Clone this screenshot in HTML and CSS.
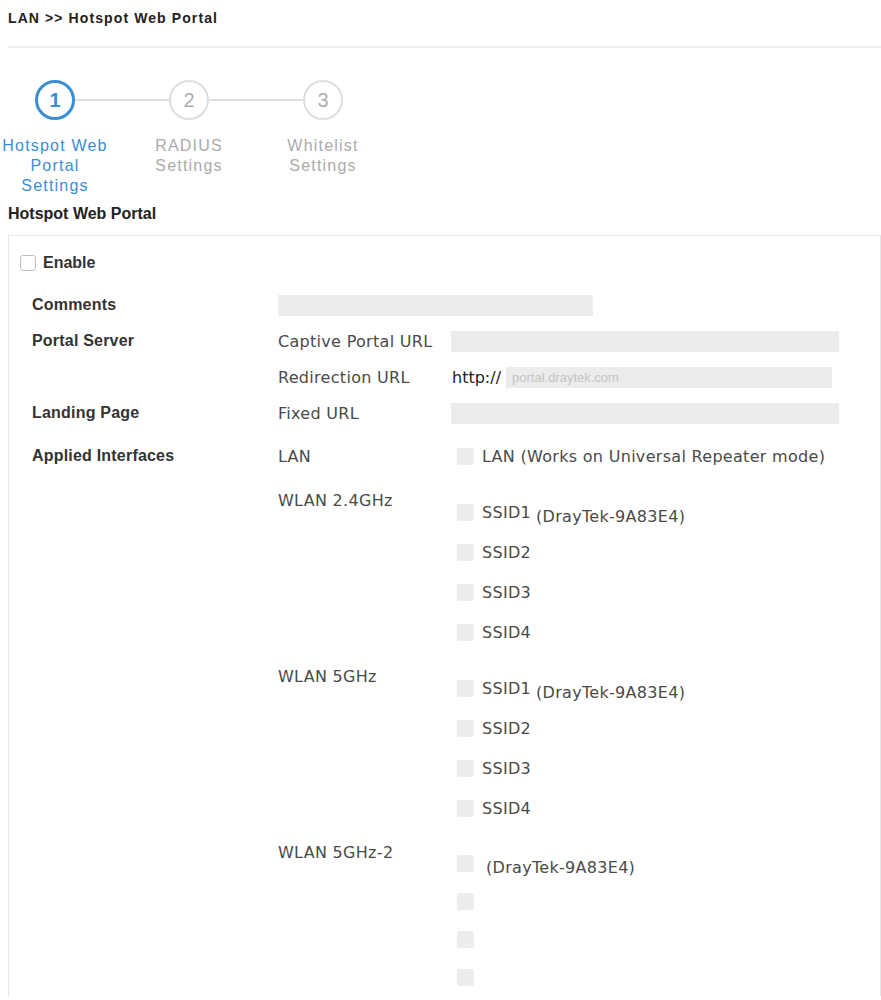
FILE: index.html
```html
<!DOCTYPE html>
<html lang="en">

<head>
    <meta charset="UTF-8">
    <meta name="viewport" content="width=device-width, initial-scale=1.0">
    <title>LAN &gt;&gt; Hotspot Web Portal</title>
    <link rel="stylesheet" href="styles.css">
</head>

<body>
    <div class="breadcrumb">LAN &gt;&gt; Hotspot Web Portal</div>
    <div class="divider"></div>

    <!-- wizard steps -->
    <div class="wizard">
        <div class="wizard-track">
            <span class="step-dot active">1</span>
            <span class="step-line"></span>
            <span class="step-dot">2</span>
            <span class="step-line"></span>
            <span class="step-dot">3</span>
        </div>
        <div class="wizard-labels">
            <div class="step-label active">Hotspot Web<br>Portal<br>Settings</div>
            <div class="step-label">RADIUS<br>Settings</div>
            <div class="step-label">Whitelist<br>Settings</div>
        </div>
    </div>

    <h3 class="section-title">Hotspot Web Portal</h3>

    <div class="panel">
        <label class="enable"><input type="checkbox" class="box">Enable</label>

        <div class="form">
            <div class="row">
                <div class="row-label">Comments</div>
                <div class="row-wide"><input type="text" class="field field-comments"></div>
            </div>

            <div class="row">
                <div class="row-label">Portal Server</div>
                <div class="row-name">Captive Portal URL</div>
                <div><input type="text" class="field field-long"></div>
            </div>

            <div class="row">
                <div class="row-label"></div>
                <div class="row-name">Redirection URL</div>
                <div class="url-wrap">
                    <span class="http">http://</span>
                    <input type="text" class="field field-url" placeholder="portal.draytek.com">
                </div>
            </div>

            <div class="row">
                <div class="row-label">Landing Page</div>
                <div class="row-name">Fixed URL</div>
                <div><input type="text" class="field field-long"></div>
            </div>

            <div class="row row-iface">
                <div class="row-label">Applied Interfaces</div>
                <div class="row-name">LAN</div>
                <label class="check check-lan"><input type="checkbox" class="box box-soft">LAN (Works on Universal Repeater mode)</label>
            </div>

            <div class="group">
                <div class="row-label"></div>
                <div class="group-name">WLAN 2.4GHz</div>
                <div class="check-list">
                    <label class="check"><input type="checkbox" class="box box-soft">SSID1<span class="ssid-name">(DrayTek-9A83E4)</span></label>
                    <label class="check"><input type="checkbox" class="box box-soft">SSID2</label>
                    <label class="check"><input type="checkbox" class="box box-soft">SSID3</label>
                    <label class="check"><input type="checkbox" class="box box-soft">SSID4</label>
                </div>
            </div>

            <div class="group">
                <div class="row-label"></div>
                <div class="group-name">WLAN 5GHz</div>
                <div class="check-list">
                    <label class="check"><input type="checkbox" class="box box-soft">SSID1<span class="ssid-name">(DrayTek-9A83E4)</span></label>
                    <label class="check"><input type="checkbox" class="box box-soft">SSID2</label>
                    <label class="check"><input type="checkbox" class="box box-soft">SSID3</label>
                    <label class="check"><input type="checkbox" class="box box-soft">SSID4</label>
                </div>
            </div>

            <div class="group group-compact">
                <div class="row-label"></div>
                <div class="group-name">WLAN 5GHz-2</div>
                <div class="check-list">
                    <label class="check"><input type="checkbox" class="box box-soft"><span class="ssid-name ssid-only">(DrayTek-9A83E4)</span></label>
                    <label class="check"><input type="checkbox" class="box box-soft"></label>
                    <label class="check"><input type="checkbox" class="box box-soft"></label>
                    <label class="check"><input type="checkbox" class="box box-soft"></label>
                </div>
            </div>
        </div>
    </div>
</body>

</html>
```

FILE: styles.css
```css
* {
    margin: 0;
    padding: 0;
    box-sizing: border-box;
}

body {
    font-family: "DejaVu Sans", Verdana, sans-serif;
    font-size: 16px;
    color: #4a4a4a;
    background-color: #fff;
}

.breadcrumb {
    height: 46px;
    padding: 10px 0 0 8px;
    font: bold 14px/16px "Liberation Sans", Arial, sans-serif;
    letter-spacing: 1.1px;
    color: #222;
}

.divider {
    height: 2px;
    margin-left: 8px;
    background-color: #ececec;
}

/* wizard */
.wizard {
    margin-top: 32px;
}

.wizard-track {
    display: flex;
    align-items: center;
    padding-left: 35px;
}

.step-dot {
    width: 40px;
    height: 40px;
    border: 2px solid #dedede;
    border-radius: 50%;
    display: flex;
    align-items: center;
    justify-content: center;
    font: 20px "Liberation Sans", Arial, sans-serif;
    color: #adadad;
}

.step-dot.active {
    border: 3px solid #3a8ed2;
    color: #3a8ed2;
    font-weight: bold;
}

.step-line {
    width: 94px;
    height: 2px;
    background-color: #dedede;
}

.wizard-labels {
    display: flex;
    gap: 24px;
    margin-top: 16px;
}

.step-label {
    width: 110px;
    text-align: center;
    font: 16px/20px "Liberation Sans", Arial, sans-serif;
    letter-spacing: 1.2px;
    color: #ababab;
}

.step-label.active {
    color: #3a8ed4;
}

.section-title {
    margin-top: 8px;
    padding-left: 8px;
    font: bold 16px/20px "Liberation Sans", Arial, sans-serif;
    color: #222;
}

/* panel */
.panel {
    margin: 11px 0 0 8px;
    border: 1px solid #e6e6e6;
    border-bottom: none;
    padding: 16px 0 0 11px;
}

.enable {
    display: flex;
    align-items: center;
    gap: 7px;
    height: 22px;
    font: bold 16px "Liberation Sans", Arial, sans-serif;
    color: #333;
}

.box {
    appearance: none;
    width: 16px;
    height: 16px;
    border: 1px solid #bdbdbd;
    border-radius: 3px;
    background-color: #fff;
    flex-shrink: 0;
}

.box-soft {
    width: 17px;
    height: 17px;
    border: none;
    border-radius: 2px;
    background-color: #ededed;
}

.form {
    margin-top: 13px;
    padding-left: 12px;
}

.row,
.group {
    display: grid;
    grid-template-columns: 246px 173px 1fr;
}

.row {
    height: 36px;
    align-items: center;
}

.row-label {
    font: bold 16px "Liberation Sans", Arial, sans-serif;
    letter-spacing: 0.2px;
    color: #333;
}

.row-name,
.group-name {
    letter-spacing: 0.3px;
}

.row-wide {
    grid-column: 2 / 4;
}

.field {
    display: block;
    height: 21px;
    border: none;
    background-color: #ebeced;
    padding-left: 6px;
    font: 13px "Liberation Sans", Arial, sans-serif;
}

.field::placeholder {
    color: #c3c3c3;
}

.field-comments {
    width: 315px;
}

.field-long {
    width: 388px;
}

.url-wrap {
    display: flex;
    align-items: center;
}

.http {
    width: 55px;
    padding-left: 1px;
    color: #222;
}

.field-url {
    width: 326px;
}

.row-iface {
    height: 40px;
    margin-top: 5px;
}

/* interface groups */
.group {
    padding-top: 16px;
    align-items: start;
}

.group-name {
    line-height: 18px;
}

.check {
    display: flex;
    align-items: center;
    gap: 8px;
    height: 40px;
    padding-left: 6px;
    letter-spacing: 0.3px;
}

.check-lan {
    height: auto;
}

.group-compact .check {
    height: 38px;
}

/* the SSID name sits a little lower than the SSID label */
.ssid-name {
    margin: 8px 0 0 -3px;
}

.ssid-only {
    margin-left: 4px;
}
```
